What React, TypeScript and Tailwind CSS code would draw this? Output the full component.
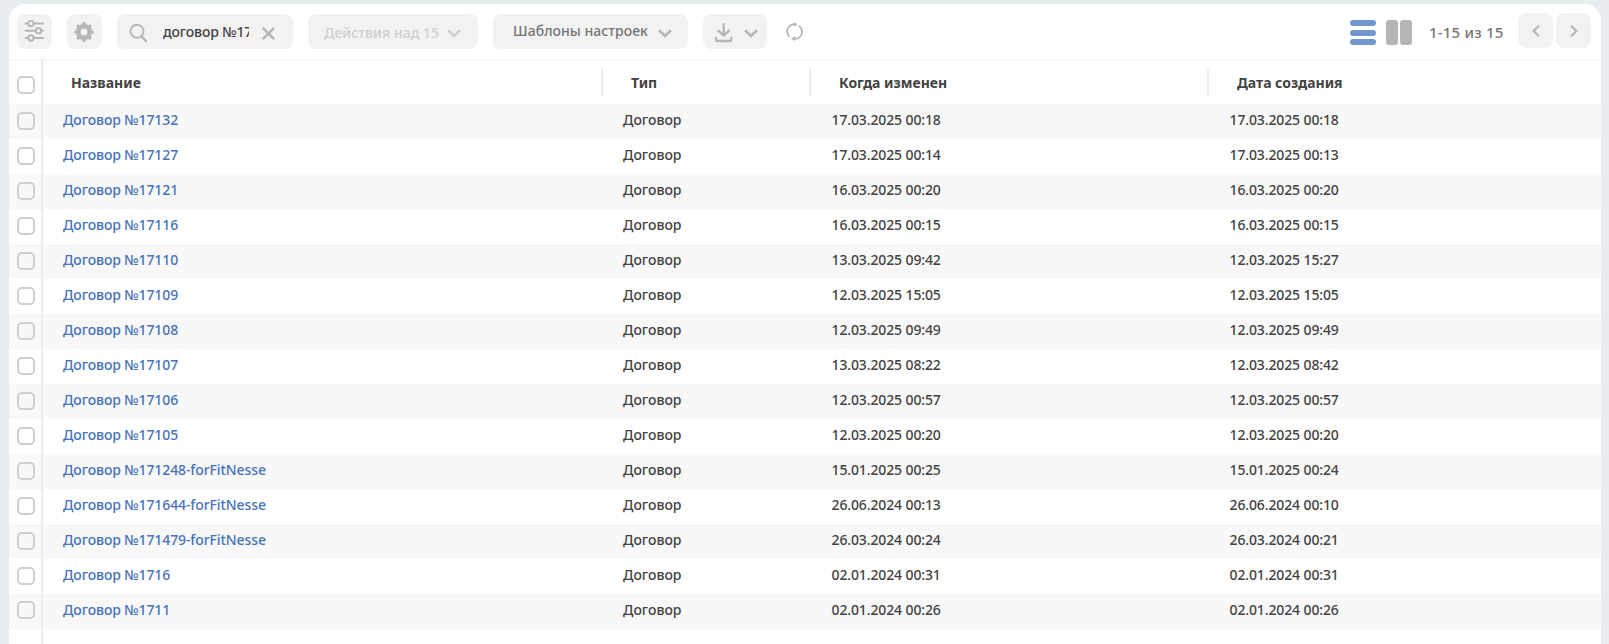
import React from "react";

const rows: [string, string, string][] = [
  ["Договор №17132", "17.03.2025 00:18", "17.03.2025 00:18"],
  ["Договор №17127", "17.03.2025 00:14", "17.03.2025 00:13"],
  ["Договор №17121", "16.03.2025 00:20", "16.03.2025 00:20"],
  ["Договор №17116", "16.03.2025 00:15", "16.03.2025 00:15"],
  ["Договор №17110", "13.03.2025 09:42", "12.03.2025 15:27"],
  ["Договор №17109", "12.03.2025 15:05", "12.03.2025 15:05"],
  ["Договор №17108", "12.03.2025 09:49", "12.03.2025 09:49"],
  ["Договор №17107", "13.03.2025 08:22", "12.03.2025 08:42"],
  ["Договор №17106", "12.03.2025 00:57", "12.03.2025 00:57"],
  ["Договор №17105", "12.03.2025 00:20", "12.03.2025 00:20"],
  ["Договор №171248-forFitNesse", "15.01.2025 00:25", "15.01.2025 00:24"],
  ["Договор №171644-forFitNesse", "26.06.2024 00:13", "26.06.2024 00:10"],
  ["Договор №171479-forFitNesse", "26.03.2024 00:24", "26.03.2024 00:21"],
  ["Договор №1716", "02.01.2024 00:31", "02.01.2024 00:31"],
  ["Договор №1711", "02.01.2024 00:26", "02.01.2024 00:26"],
];

const GRID = "grid grid-cols-[32px_2px_560px_208px_398px_1fr]";

function Chevron({ className }: { className: string }) {
  return (
    <svg className={className} width="14" height="9" viewBox="0 0 14 9" fill="none" stroke="currentColor" strokeWidth="2.6">
      <path d="M1 1.2 7 7 13 1.2" />
    </svg>
  );
}

function SlidersIcon() {
  return (
    <svg width="20" height="22" viewBox="0 0 20 22" fill="none" stroke="currentColor" strokeWidth="1.9" strokeLinecap="round">
      <path d="M1.500 3.500H4M10 3.500h9M1.500 10.700h9.500M17.500 10.700H19M1.500 18H4M10 18h9" />
      <circle cx="7" cy="3.500" r="2.700" />
      <circle cx="14.500" cy="10.700" r="2.700" />
      <circle cx="7" cy="18" r="2.700" />
    </svg>
  );
}

function GearIcon() {
  return (
    <svg width="20" height="20" viewBox="0 0 20 20" fill="none" stroke="currentColor">
      <circle cx="10" cy="10" r="5.700" strokeWidth="4.600" />
      <path
        d="M10 2.600V1.800M10 17.400v.8M2.600 10h-.8M17.400 10h.8M4.800 4.800l-.5-.5M15.200 15.200l.5.5M15.200 4.800l.5-.5M4.800 15.200l-.5.5"
        strokeWidth="3.600"
        strokeLinecap="round"
      />
    </svg>
  );
}

function Checkbox({ className = "" }: { className?: string }) {
  return <span className={`ml-2 block size-[18px] rounded-[5px] border-2 border-[#cfcfcf] ${className}`} />;
}

function HeaderCell({ label, separator = true }: { label: string; separator?: boolean }) {
  return (
    <div className="flex h-[43px] justify-between pt-2">
      <span className="pt-[3px] pl-7 font-bold">{label}</span>
      {separator && <span className="h-[27px] w-[2px] bg-[#e7edf0]" />}
    </div>
  );
}

export default function App() {
  return (
    <div className="h-[644px] overflow-hidden bg-[#e7edef] px-[9px] pr-2 pt-1 font-['Noto_Sans','Open_Sans',sans-serif] text-sm leading-[22px] font-medium text-[#424242]">
      <main className="flex h-[640px] flex-col overflow-hidden rounded-t-2xl bg-white">
        <div className="flex h-[57px] shrink-0 border-b-2 border-[#f6f6f6] pt-[10px] pr-[10px] pl-2 text-[#b6b6b6]">
          <button className="flex size-[35px] rounded-lg bg-[#f2f2f2] pt-[6px] pl-[7px]">
            <SlidersIcon />
          </button>
          <button className="ml-[15px] flex size-[35px] rounded-lg bg-[#f2f2f2] pt-2 pl-[7px]">
            <GearIcon />
          </button>
          <div className="ml-[15px] flex h-[35px] w-[176px] rounded-lg bg-[#f2f2f2] pl-3">
            <svg className="mt-[10px]" width="19" height="19" viewBox="0 0 19 19" fill="none" stroke="currentColor" strokeWidth="1.900">
              <circle cx="8" cy="7.300" r="6.500" />
              <path d="m12.500 12.300 5 5.500" strokeWidth="2.400" />
            </svg>
            <span className="mt-[7px] ml-[15px] w-[86px] overflow-hidden tracking-[-0.13px] whitespace-nowrap text-[#424242]">договор №17</span>
            <svg className="mt-[13px] ml-[13px]" width="13" height="13" viewBox="0 0 13 13" stroke="currentColor" strokeWidth="2.400">
              <path d="m.8.800 11.400 11.400M12.200.800.800 12.200" />
            </svg>
          </div>
          <button className="ml-[15px] flex h-[35px] w-[170px] rounded-lg bg-[#f2f2f2] pl-4 text-[#cfcfcf]">
            <span className="mt-2 w-[123px] text-left tracking-[0.03px] whitespace-nowrap">Действия над 15</span>
            <Chevron className="mt-[15px]" />
          </button>
          <button className="ml-[15px] flex h-[35px] w-[195px] rounded-lg bg-[#f2f2f2] pl-5">
            <span className="mt-[6px] w-[145px] text-left tracking-[0.03px] whitespace-nowrap text-[#757575]">Шаблоны настроек</span>
            <Chevron className="mt-[15px]" />
          </button>
          <button className="ml-[15px] flex h-[35px] w-16 rounded-lg bg-[#f2f2f2] pl-3">
            <svg
              className="mt-[9px]"
              width="18"
              height="20"
              viewBox="0 0 18 20"
              fill="none"
              stroke="currentColor"
              strokeWidth="2.300"
              strokeLinecap="round"
              strokeLinejoin="round"
            >
              <path d="M8.700 1.200v11.300M3.400 7.600l5.300 5.200L14 7.600M1.200 14.800v1.500q0 1.700 1.700 1.700h11.700q1.700 0 1.700-1.700v-1.500" />
            </svg>
            <Chevron className="mt-[15px] ml-[11px]" />
          </button>
          <svg className="mt-2 ml-[19px]" width="18" height="19" viewBox="0 0 18 19" fill="none" stroke="currentColor" strokeWidth="1.700">
            <path d="M3.600 14.600A7 7 0 0 1 8.800 2.400M12.900 4A7 7 0 0 1 8 16.700" />
            <path d="m7.700 0 4 2.400-4 2.400zM9.100 14.300l-4 2.400 4 2.300z" fill="currentColor" stroke="none" />
          </svg>
          <div className="ml-auto flex">
            <div className="mt-[6px] flex h-[25px] w-[26px] flex-col justify-between">
              <span className="h-[6px] rounded-full bg-[#7297cf]" />
              <span className="h-[6px] rounded-full bg-[#7297cf]" />
              <span className="h-[6px] rounded-full bg-[#7297cf]" />
            </div>
            <div className="mt-[6px] ml-[10px] flex h-[25px] w-[26px] gap-[2px]">
              <span className="flex-1 rounded-[3px] bg-[#b6b6b6]" />
              <span className="flex-1 rounded-[3px] bg-[#b6b6b6]" />
            </div>
            <span className="mt-[7px] ml-[17px] w-[89px] text-[15px] tracking-[0.2px] whitespace-nowrap text-[#757575]">1-15 из 15</span>
            <button className="-mt-px flex size-[35px] items-center justify-center rounded-lg bg-[#f2f2f2]">
              <svg width="8" height="12" viewBox="0 0 8 12" fill="none" stroke="currentColor" strokeWidth="2.200">
                <path d="M7 .8 1.600 6 7 11.200" />
              </svg>
            </button>
            <button className="-mt-px ml-[3px] flex size-[35px] items-center justify-center rounded-lg bg-[#f2f2f2]">
              <svg width="8" height="12" viewBox="0 0 8 12" fill="none" stroke="currentColor" strokeWidth="2.200">
                <path d="M1 .8 6.400 6 1 11.200" />
              </svg>
            </button>
          </div>
        </div>

        <div className={`${GRID} h-[43px] shrink-0`}>
          <Checkbox className="mt-[15px]" />
          <span className="-mt-[2px] bg-[#e7edf0]" />
          <HeaderCell label="Название" />
          <HeaderCell label="Тип" />
          <HeaderCell label="Когда изменен" />
          <HeaderCell label="Дата создания" separator={false} />
        </div>

        {rows.map(([name, changed, created], i) => (
          <div key={name} className={`${GRID} h-[35px] shrink-0 ${i % 2 === 0 ? "bg-[#f8f8f8]" : ""}`}>
            <Checkbox className={i === rows.length - 1 ? "mt-[7px]" : "mt-2"} />
            <span className="bg-[#e7edf0]" />
            <a className="pt-[5px] pl-5 tracking-[-0.1px] text-[#4672b8]">{name}</a>
            <span className="pt-[5px] pl-5">Договор</span>
            <span className="pt-[5px] pl-[20.5px] tracking-[-0.12px]">{changed}</span>
            <span className="pt-[5px] pl-[20.5px] tracking-[-0.12px]">{created}</span>
          </div>
        ))}
        <div className={`${GRID} flex-1`}>
          <span />
          <span className="bg-[#e7edf0]" />
        </div>
      </main>
    </div>
  );
}
